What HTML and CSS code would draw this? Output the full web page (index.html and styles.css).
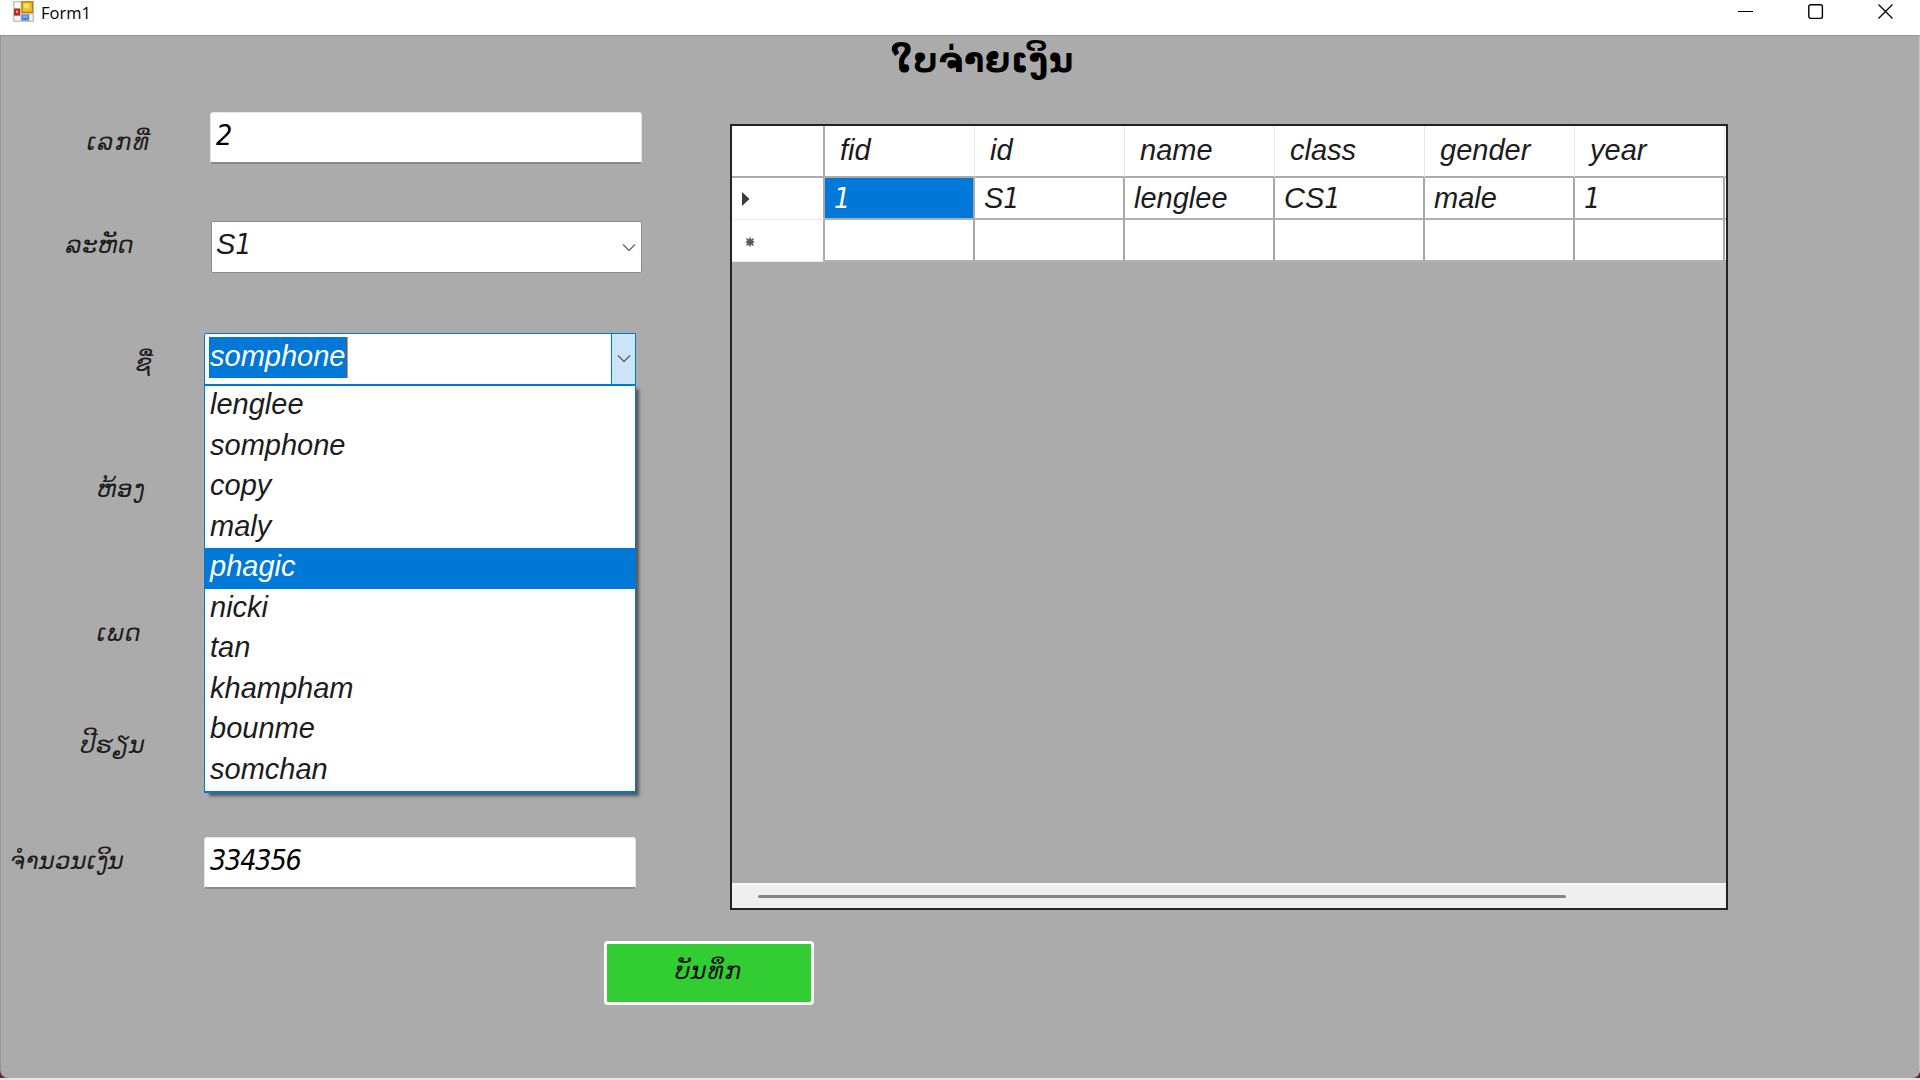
FILE: index.html
```html
<!DOCTYPE html>
<html lang="lo">
<head>
<meta charset="utf-8">
<title>Form1</title>
<link rel="stylesheet" href="styles.css">
</head>
<body>
<div class="window">
  <header class="titlebar">
    <svg class="app-icon" width="21" height="21" viewBox="0 0 21 21">
      <rect x="0" y="0" width="21" height="21" fill="#c4c4c4"/>
      <rect x="1.5" y="1.5" width="6" height="6" fill="#fff"/>
      <rect x="1.5" y="15" width="6" height="4.5" fill="#f4f4f4"/>
      <rect x="16.500" y="13.500" width="3" height="6" fill="#f4f4f4"/>
      <rect x="1" y="7.500" width="6" height="7" fill="#c0261e"/>
      <rect x="3" y="9.500" width="2" height="2.500" fill="#eb9a90"/>
      <rect x="9" y="0.800" width="10.500" height="10.500" fill="#f4c22b" stroke="#b8860b" stroke-width="1.400"/>
      <rect x="11" y="2.800" width="5" height="4" fill="#fde27a"/>
      <rect x="8.500" y="13.500" width="7.500" height="6" fill="#4f86e0"/>
      <rect x="10" y="14.500" width="4.500" height="2" fill="#8db5f5"/>
    </svg>
    <span class="caption">Form1</span>
    <div class="controls">
      <svg width="16" height="16" viewBox="0 0 16 16"><path d="M0 7.500H15" stroke="#000" stroke-width="1"/></svg>
      <svg width="16" height="16" viewBox="0 0 16 16"><rect x="0.800" y="0.800" width="13.600" height="13.600" rx="1.800" fill="none" stroke="#000" stroke-width="1.400"/></svg>
      <svg width="16" height="16" viewBox="0 0 16 16"><path d="M0.500 0.500L14.500 14.500M14.500 0.500L0.500 14.500" stroke="#000" stroke-width="1.300"/></svg>
    </div>
  </header>

  <main class="client">
    <form class="fields">
      <div class="row row-number">
        <label class="lo"><span>ເລກທີ່</span></label>
        <div class="textbox"><span class="num">2</span></div>
      </div>
      <div class="row row-id">
        <label class="lo"><span>ລະຫັດ</span></label>
        <div class="combo">S<span class="num">1</span>
          <svg class="chevron" width="14" height="10" viewBox="0 0 14 10"><path d="M1 1.500L7 7.500L13 1.500" fill="none" stroke="#6e6e6e" stroke-width="1.500"/></svg>
        </div>
      </div>
      <div class="row row-name">
        <label class="lo"><span>ຊື່</span></label>
        <div class="combo open">
          <span class="selection">somphone</span>
          <div class="drop"><svg width="14" height="10" viewBox="0 0 14 10"><path d="M1 1.500L7 7.500L13 1.500" fill="none" stroke="#5c6670" stroke-width="1.500"/></svg></div>
          <ul class="list">
            <li>lenglee</li>
            <li>somphone</li>
            <li>copy</li>
            <li>maly</li>
            <li class="active">phagic</li>
            <li>nicki</li>
            <li>tan</li>
            <li>khampham</li>
            <li>bounme</li>
            <li>somchan</li>
          </ul>
        </div>
      </div>
      <div class="row row-class"><label class="lo"><span>ຫ້ອງ</span></label></div>
      <div class="row row-gender"><label class="lo"><span>ເພດ</span></label></div>
      <div class="row row-year"><label class="lo"><span>ປີຮຽນ</span></label></div>
      <div class="row row-amount">
        <label class="lo"><span>ຈໍານວນເງິນ</span></label>
        <div class="textbox"><span class="num">334356</span></div>
      </div>
      <button class="save lo" type="button"><span>ບັນທຶກ</span></button>
    </form>

    <section class="records">
      <h1><span>ໃບຈ່າຍເງິນ</span></h1>
      <div class="grid">
        <div class="cells">
          <div class="head corner"></div>
          <div class="head">fid</div><div class="head">id</div><div class="head">name</div><div class="head">class</div><div class="head">gender</div><div class="head">year</div><div class="head"></div>
          <div class="stub"><svg width="10" height="16" viewBox="0 0 10 16"><path d="M1 1V15L8.500 8Z" fill="#3c3c3c"/></svg></div>
          <div class="cell selected"><span class="num">1</span></div><div class="cell">S<span class="num">1</span></div><div class="cell">lenglee</div><div class="cell">CS<span class="num">1</span></div><div class="cell">male</div><div class="cell"><span class="num">1</span></div><div class="cell"></div>
          <div class="stub last"><svg class="star" width="10" height="10" viewBox="0 0 10 10"><circle cx="5" cy="5" r="3" fill="#555"/><path d="M5 0.500V9.500M0.800 5H9.200M1.500 1.500L8.500 8.500M8.500 1.500L1.500 8.500" stroke="#5a5a5a" stroke-width="1.500"/></svg></div>
          <div class="cell"></div><div class="cell"></div><div class="cell"></div><div class="cell"></div><div class="cell"></div><div class="cell"></div><div class="cell"></div>
        </div>
        <div class="scrollbar"><div class="thumb"></div></div>
      </div>
    </section>
  </main>
</div>
</body>
</html>
```
FILE: styles.css
```css
* { box-sizing: border-box; }

body {
  margin: 0;
  background: #6b2436;
  font: italic 29px/40px "Liberation Sans", sans-serif;
  color: #1c1c1c;
}

.window {
  display: flex;
  flex-direction: column;
  width: 1920px;
  height: 1080px;
  border-bottom: 2px solid #e6e6e6;
  overflow: hidden;
}

.titlebar {
  display: flex;
  align-items: flex-start;
  height: 35px;
  padding: 1px 26px 0 13px;
  background: #fff;
}

.caption {
  margin-left: 7px;
  font: normal 16.500px/24px "Open Sans", sans-serif;
  color: #000;
}

.controls {
  display: flex;
  gap: 54px;
  margin: 3px 0 0 auto;
}

.client {
  display: flex;
  flex: 1;
  border: 1px solid #979797;
  border-right-color: #c6c6c6;
  border-bottom: 0;
  border-radius: 0 0 8px 8px;
  background: #ababab;
}

.fields {
  display: grid;
  grid-template-rows: 109px 112px 127px 143px 113px 121px 104px 64px;
  width: 729px;
  padding-top: 76px;
  align-content: start;
}

.row {
  display: flex;
  align-items: flex-start;
}

.lo {
  font: italic 24px/40px "DejaVu Sans", sans-serif;
  letter-spacing: 0.600px;
}

.row .lo {
  width: 203px;
  white-space: nowrap;
}

.num {
  font-family: "DejaVu Sans Condensed", "DejaVu Sans", sans-serif;
  font-size: 28.500px;
  letter-spacing: -1.200px;
}

.row-number .lo, .row-id .lo { width: 209px; }
.row-number .lo { padding: 10px 0 0 86px; letter-spacing: 2px; }
.row-id .lo { padding: 4px 0 0 65px; }
.row-name .lo { padding: 10px 0 0 134px; }
.row-class .lo { padding: 9px 0 0 96px; }
.row-gender .lo { padding: 10px 0 0 96px; letter-spacing: 1.500px; }
.row-year .lo { padding: 9px 0 0 80px; }
.row-amount .lo { padding: 4px 0 0 9px; }

.textbox {
  width: 432px;
  height: 52px;
  padding: 2px 5px;
  border: 1px solid #e4e4e4;
  border-bottom: 2px solid #8a8a8a;
  border-radius: 3px;
  background: #fff;
  color: #000;
}

.combo {
  position: relative;
  width: 431px;
  height: 52px;
  margin-left: 1px;
  padding: 2px 4px;
  border: 1px solid #8c8c8c;
  border-radius: 2px;
  background: #fff;
}

.chevron {
  position: absolute;
  right: 5px;
  top: 21px;
}

.combo.open {
  display: flex;
  width: 432px;
  margin-left: 0;
  padding: 3px 0 0 4px;
  border: 1px solid #0078d7;
}

.selection {
  width: 139px;
  height: 41px;
  padding-left: 1px;
  border-right: 1px solid #ff8728;
  background: #0078d7;
  color: #fff;
  line-height: 38px;
}

.drop {
  display: flex;
  align-items: center;
  justify-content: center;
  width: 25px;
  height: 52px;
  margin: -4px -1px 0 auto;
  border: 1px solid #0078d7;
  background: #cce4f7;
}

.list {
  position: absolute;
  left: -1px;
  top: 50px;
  width: 432px;
  height: 409px;
  margin: 0;
  padding: 0;
  border: 1px solid #0078d7;
  border-top-width: 2px;
  border-bottom-width: 2px;
  background: #fff;
  box-shadow: 4px 4px 3px -1px #555;
  list-style: none;
}

.list li {
  height: 40.500px;
  padding-left: 5px;
  line-height: 37px;
}

.list .active {
  background: #0078d7;
  color: #fff;
}

.save {
  justify-self: start;
  width: 210px;
  height: 64px;
  margin-left: 603px;
  padding: 0 0 4px;
  border: 3px solid #fff;
  border-radius: 4px;
  background: #32cd32;
  color: #111;
  letter-spacing: 1.500px;
}

.records { width: 998px; }

h1 {
  margin: 0;
  padding: 0 0 0 161px;
  height: 88px;
  font: bold 33px/50px "DejaVu Sans", sans-serif;
  letter-spacing: 1px;
  color: #000;
}

.grid {
  display: flex;
  flex-direction: column;
  justify-content: space-between;
  width: 998px;
  height: 786px;
  border: 2px solid #222;
  overflow: hidden;
}

.cells {
  display: grid;
  grid-template-columns: 93px repeat(6, 150px) 1px;
  grid-template-rows: 52px 42px 42px;
}

.cells > div {
  overflow: hidden;
  background: #fff;
  white-space: nowrap;
}

.head {
  padding: 4px 0 0 15px;
  border-right: 1px solid #e6e6e6;
  border-bottom: 2px solid #acacac;
}

.head.corner { border-right: 2px solid #acacac; }

.cell {
  padding-left: 9px;
  border-right: 2px solid #a8a8a8;
  border-bottom: 2px solid #b0b0b0;
}

.cell:nth-child(8n), .head:nth-child(8n) { padding: 0; border-right: 0; }

.cells .selected {
  background: #0078d7;
  color: #fff;
}

.stub {
  display: flex;
  align-items: center;
  padding-left: 9px;
  border-right: 2px solid #acacac;
  border-bottom: 1px solid #e9e9e9;
}

.stub.last { padding: 3px 0 0 13px; }

.scrollbar {
  height: 25px;
  padding: 11px 160px 0 26px;
  border-top: 2px solid #f8f8f8;
  background: #efefef;
}

.thumb {
  height: 3px;
  margin-top: -1px;
  border-radius: 2px;
  background: #868686;
}
```
